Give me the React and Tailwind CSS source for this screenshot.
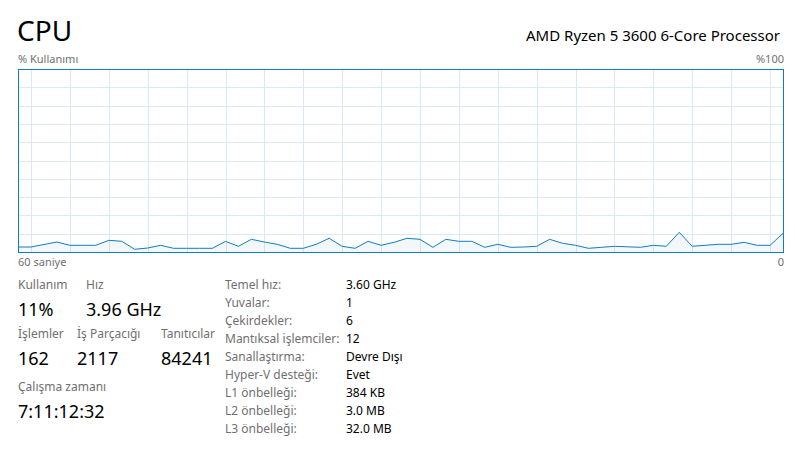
import React from "react";

const ys = [247,247,244.5,242,245.3,245.3,245.3,240.3,241.3,249.3,248,245.3,248.3,248.3,248.3,248.3,241.3,246.3,239.3,242,244.3,248.3,248.3,244.3,238.3,246.3,248.3,241.3,245.3,242.3,238.3,239.3,247.3,239.3,241.3,241.3,247.3,244.3,247.3,247,246.3,239.3,243.3,245.3,248.3,247.3,246.3,246.8,247.3,245.3,246.3,232.3,246.3,245.3,244.3,244.3,242.3,245.3,245.3,233.3];

function Graph() {
  const W = 766, H = 184;
  const pts = ys.map((y, i) => [ (i * 765) / 59, y - 69 ]);
  const line = pts.map(([x, y]) => `${x.toFixed(2)},${y.toFixed(2)}`).join(" ");
  const fill = `0,183 ${line} 765,183`;
  const hLines = [];
  for (let k = 1; k < 10; k++) hLines.push(Math.round(k * 18.3) + 0.5);
  const vLines = [];
  for (let x = 13; x < 765; x += 38.9) vLines.push(Math.round(x) + 0.5);
  return (
    <svg width={W} height={H} className="block" viewBox={`0 0 ${W} ${H}`}>
      <rect x="0" y="0" width={W} height={H} fill="#ffffff" />
      {hLines.map((y) => (
        <line key={"h" + y} x1="0" x2={W} y1={y} y2={y} stroke="#d9eaf4" strokeWidth="1" />
      ))}
      {vLines.map((x) => (
        <line key={"v" + x} x1={x} x2={x} y1="0" y2={H} stroke="#d9eaf4" strokeWidth="1" />
      ))}
      <polygon points={fill} fill="#117dbb" fillOpacity="0.06" />
      <polyline points={line} fill="none" stroke="#117dbb" strokeWidth="1" strokeLinejoin="round" />
      <rect x="0.5" y="0.5" width={W - 1} height={H - 1} fill="none" stroke="#117dbb" strokeWidth="1" />
    </svg>
  );
}

function Stat({ label, value, className = "" }) {
  return (
    <div className={className}>
      <div className="text-[12px] leading-[18px] text-[#707070]">{label}</div>
      <div className="mt-[3px] text-[18px] leading-[24px] text-[#000]">{value}</div>
    </div>
  );
}

const rows = [
  ["Temel hız:", "3.60 GHz"],
  ["Yuvalar:", "1"],
  ["Çekirdekler:", "6"],
  ["Mantıksal işlemciler:", "12"],
  ["Sanallaştırma:", "Devre Dışı"],
  ["Hyper-V desteği:", "Evet"],
  ["L1 önbelleği:", "384 KB"],
  ["L2 önbelleği:", "3.0 MB"],
  ["L3 önbelleği:", "32.0 MB"],
];

export default function App() {
  return (
    <div className="w-[795px] h-[465px] overflow-hidden bg-white pl-[18px] pr-[11px] font-['Noto_Sans','Liberation_Sans',sans-serif] text-black">
      <div className="flex items-baseline justify-between pt-[12px]">
        <div className="-ml-[1px] text-[28px] leading-[36px] text-black">CPU</div>
        <div className="mr-[4px] text-[15px] leading-[20px] text-black">AMD Ryzen 5 3600 6-Core Processor</div>
      </div>
      <div className="mt-[4px] flex justify-between text-[11px] leading-[14px] text-[#707070]">
        <span>% Kullanımı</span>
        <span>%100</span>
      </div>
      <div className="mt-[3px]">
        <Graph />
      </div>
      <div className="mt-[2px] flex justify-between text-[11px] leading-[14px] text-[#707070]">
        <span>60 saniye</span>
        <span>0</span>
      </div>
      <div className="mt-[7px] flex">
        <div className="w-[207px] shrink-0">
          <div className="flex h-[49px]">
            <Stat className="w-[68px]" label="Kullanım" value="11%" />
            <Stat label="Hız" value="3.96 GHz" />
          </div>
          <div className="flex h-[53px]">
            <Stat className="w-[59px]" label="İşlemler" value="162" />
            <Stat className="w-[84px]" label="İş Parçacığı" value="2117" />
            <Stat label="Tanıtıcılar" value="84241" />
          </div>
          <Stat label="Çalışma zamanı" value="7:11:12:32" />
        </div>
        <div className="grid grid-cols-[121px_auto] text-[12px] leading-[18px]">
          {rows.map(([k, v]) => (
            <React.Fragment key={k}>
              <div className="text-[#707070]">{k}</div>
              <div className="text-black">{v}</div>
            </React.Fragment>
          ))}
        </div>
      </div>
    </div>
  );
}
